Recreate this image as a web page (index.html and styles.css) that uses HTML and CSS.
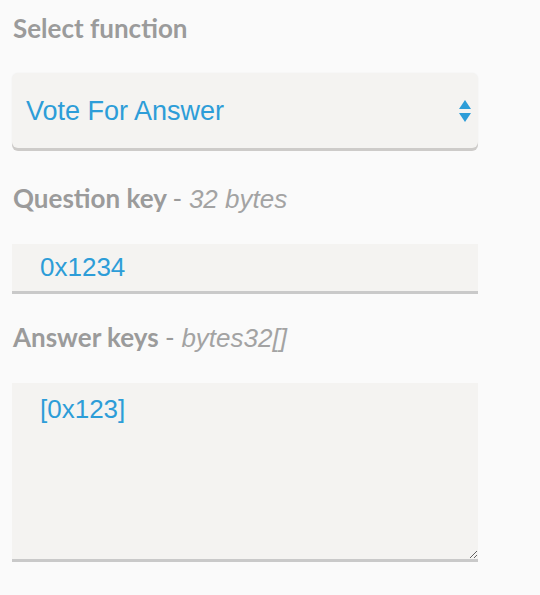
FILE: index.html
```html
<!DOCTYPE html>
<html lang="en">
<head>
    <meta charset="UTF-8">
    <meta name="viewport" content="width=device-width, initial-scale=1.0">
    <title>Contract Function</title>
    <link rel="stylesheet" href="styles.css">
</head>
<body>
    <div class="container">
        <div class="form-group group-function">
            <label for="func">Select function</label>
            <div class="select-wrap">
                <select id="func">
                    <option>Vote For Answer</option>
                    <option>Add Question</option>
                    <option>Add Answer</option>
                </select>
                <svg class="select-arrows" width="12" height="23" viewBox="0 0 12 23">
                    <polygon points="6,0 12,9 0,9" fill="#2d9dd8"/>
                    <polygon points="0,13 12,13 6,22" fill="#2d9dd8"/>
                </svg>
            </div>
        </div>
        <div class="form-group group-question">
            <label for="questionKey">Question key <span class="type">- <em>32 bytes</em></span></label>
            <input type="text" id="questionKey" value="0x1234">
        </div>
        <div class="form-group group-answers">
            <label for="answerKeys">Answer keys <span class="type">- <em>bytes32[]</em></span></label>
            <textarea id="answerKeys">[0x123]</textarea>
        </div>
    </div>
</body>
</html>
```

FILE: styles.css
```css
body {
    margin: 0;
    background: #fafafa;
    font-family: Lato, "Open Sans", sans-serif;
}
.container {
    width: 466px;
    padding: 13px 0 0 12px;
}
.form-group {
    margin-bottom: 36px;
}
.group-function {
    margin-bottom: 35px;
}
.group-question {
    margin-bottom: 28px;
}
label {
    display: block;
    font-size: 26px;
    line-height: 30px;
    font-weight: bold;
    color: #9b9b9b;
    margin-bottom: 30px;
    padding-left: 1px;
}
label .type {
    font-weight: normal;
}
label em {
    font-family: "Liberation Sans", Arial, sans-serif;
    font-size: 26px;
    color: #a3a3a3;
}
.select-wrap {
    position: relative;
}
select, input[type="text"], textarea {
    display: block;
    width: 100%;
    box-sizing: border-box;
    font-family: "Liberation Sans", Arial, sans-serif;
    font-size: 26px;
    color: #2d9dd8;
    background: #f4f3f1;
    border: none;
    outline: none;
    margin: 0;
}
select {
    -webkit-appearance: none;
    appearance: none;
    height: 75px;
    padding: 0 40px 0 14px;
    font-size: 27px;
    border-radius: 6px;
    box-shadow: 0 3px 0 #cdcbc9, 0 0 2px rgba(0, 0, 0, 0.06);
}
.select-arrows {
    position: absolute;
    right: 7px;
    top: 27px;
}
input[type="text"] {
    height: 50px;
    padding: 0 28px;
    border-bottom: 3px solid #c9c9c9;
}
textarea {
    height: 179px;
    padding: 11px 28px;
    border-bottom: 3px solid #c9c9c9;
    resize: vertical;
}
```
